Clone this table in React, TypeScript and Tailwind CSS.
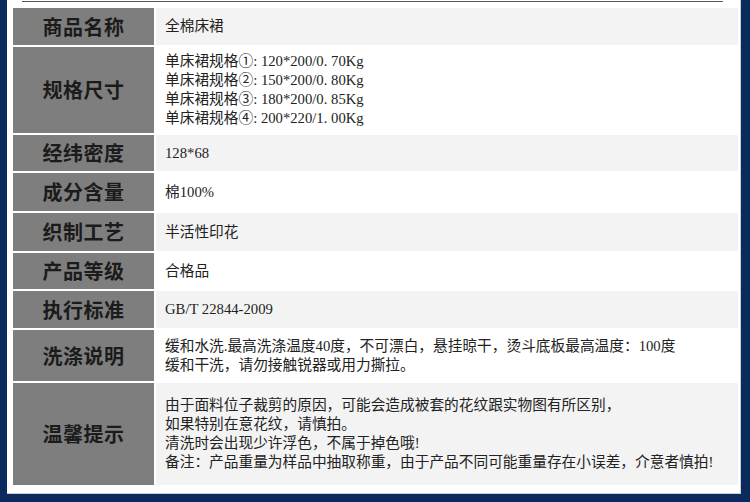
import React from 'react';

interface Row {
  label: string;
  lines: string[];
  height: string;
}

const rows: Row[] = [
  { label: '商品名称', lines: ['全棉床裙'], height: 'h-[37px]' },
  {
    label: '规格尺寸',
    lines: [
      '单床裙规格①: 120*200/0. 70Kg',
      '单床裙规格②: 150*200/0. 80Kg',
      '单床裙规格③: 180*200/0. 85Kg',
      '单床裙规格④: 200*220/1. 00Kg'
    ],
    height: 'h-[86px]'
  },
  { label: '经纬密度', lines: ['128*68'], height: 'h-[36px]' },
  { label: '成分含量', lines: ['棉100%'], height: 'h-[38px]' },
  { label: '织制工艺', lines: ['半活性印花'], height: 'h-[38px]' },
  { label: '产品等级', lines: ['合格品'], height: 'h-[36px]' },
  { label: '执行标准', lines: ['GB/T 22844-2009'], height: 'h-[37px]' },
  {
    label: '洗涤说明',
    lines: [
      '缓和水洗.最高洗涤温度40度，不可漂白，悬挂晾干，烫斗底板最高温度：100度',
      '缓和干洗，请勿接触锐器或用力撕拉。'
    ],
    height: 'h-[51px]'
  },
  {
    label: '温馨提示',
    lines: [
      '由于面料位子裁剪的原因，可能会造成被套的花纹跟实物图有所区别，',
      '如果特别在意花纹，请慎拍。',
      '清洗时会出现少许浮色，不属于掉色哦!',
      '备注：产品重量为样品中抽取称重，由于产品不同可能重量存在小误差，介意者慎拍!'
    ],
    height: 'h-[102px]'
  }
];

const App: React.FC = () => {
  return (
    <div className="w-[750px] h-[502px] bg-[#0b2a5e] flex overflow-hidden">
      <div className="ml-[7px] mr-[9px] mb-[8px] flex-1 bg-white border-r border-b border-[#c9cdd6] flex flex-col">
        <div className="ml-[15px] w-[701px] h-px mt-px bg-[#555]" />
        <div className="mt-[6px] ml-[6px] mr-[2px] flex flex-col gap-[2px]">
          {rows.map((row, i) => (
            <div key={row.label} className={`flex gap-[2px] ${row.height}`}>
              <div className="w-[141px] shrink-0 bg-[#7e7e7e] flex items-center justify-center text-[20px] font-semibold text-[#1b1b1b] font-['Noto_Sans_CJK_SC',sans-serif] tracking-[0.5px]">
                {row.label}
              </div>
              <div
                className={`flex-1 flex flex-col justify-center pl-[9px] text-[14.7px] leading-[19px] text-[#222] font-['Liberation_Serif','Noto_Sans_CJK_SC',serif] ${
                  i % 2 === 0 ? 'bg-[#f3f3f3]' : 'bg-white'
                }`}
              >
                {row.lines.map((line) => (
                  <div key={line} className="whitespace-nowrap">
                    {line}
                  </div>
                ))}
              </div>
            </div>
          ))}
        </div>
      </div>
    </div>
  );
};

export default App;
